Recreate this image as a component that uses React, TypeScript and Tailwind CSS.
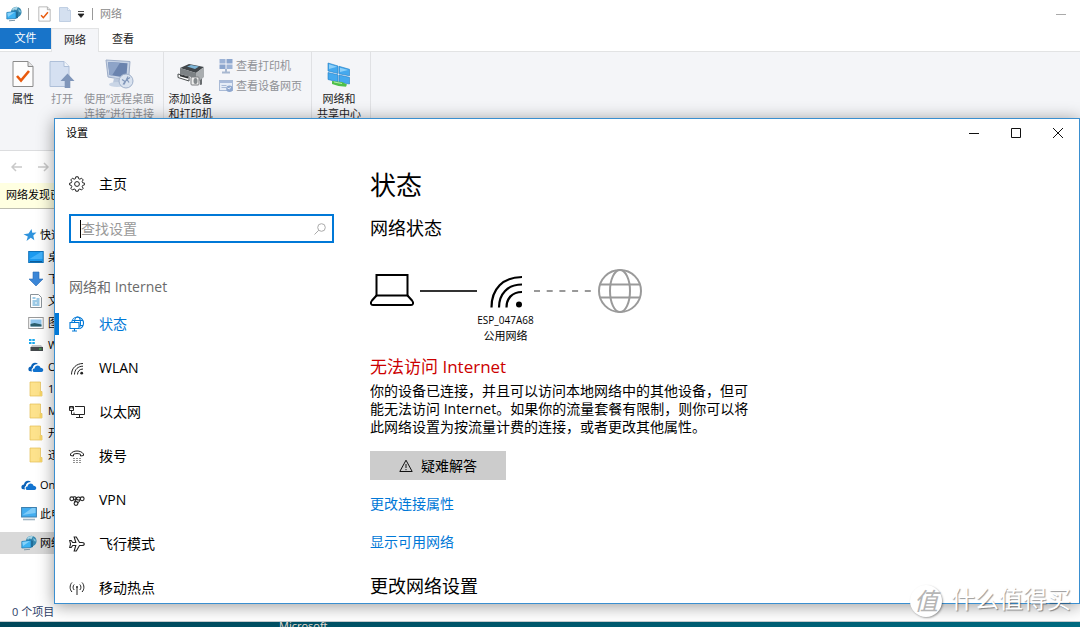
import React, { useState } from 'react';

type IconProps = { className?: string };

/* ---------- Explorer icons ---------- */

const NetworkPcIcon = ({ className = '' }: IconProps) => (
    <svg className={className} width="16" height="16" viewBox="0 0 16 16">
        <circle cx="10.300" cy="6" r="5.300" fill="#3787ad" />
        <path d="M6 3c1.500-2 4-2.500 6-1.800L10.500 4 8 3.500 7 5z" fill="#a8d5e6" />
        <path d="M12 3l2.500 1.500.5 2-2-.5z" fill="#7fc0dc" />
        <path d="M.8 6.500L10 5.300v7.200L.8 13z" fill="#3db2f2" stroke="#1c75ad" strokeWidth=".7" />
        <path d="M1.300 7L9 6 2 11z" fill="#86d2fa" />
        <path d="M10 5.300l2 .6v6l-2 .6z" fill="#216d99" />
        <path d="M3 14.800l6-.5" stroke="#7d97a8" strokeWidth="1" />
    </svg>
);

const PropertiesIcon = ({ className = '' }: IconProps) => (
    <svg className={className} viewBox="0 0 22 28">
        <path d="M1 1.500h15l5 5v20H1z" fill="#fdfdfd" stroke="#8a8a8a" />
        <path d="M16 1.500v5h5" fill="#e4e4e4" stroke="#8a8a8a" />
        <path d="M5 16l4 4.500L17 11" fill="none" stroke="#e8590c" strokeWidth="2.600" />
    </svg>
);

const PageIcon = () => (
    <svg width="12" height="15" viewBox="0 0 12 15">
        <path d="M.5.500h8l3 3v11H.5z" fill="#d4e0f0" stroke="#c0cfe3" />
        <path d="M8.500.500v3h3" fill="#eef3fa" stroke="#c0cfe3" />
    </svg>
);

const OpenIcon = () => (
    <svg width="26" height="28" viewBox="0 0 26 28">
        <path d="M1 1.500h14l5 5v20H1z" fill="#d5e0f1" stroke="#aebfd8" />
        <path d="M15 1.500v5h5" fill="#f2f6fb" stroke="#aebfd8" />
        <path d="M18.500 13.500l7 7.500h-4.200v7h-5.600v-7h-4.200z" fill="#8096ba" />
    </svg>
);

const RemoteIcon = () => (
    <svg width="30" height="30" viewBox="0 0 30 30">
        <path d="M2 1l24 1.500-1.500 19L4 18z" fill="#c8d4e6" stroke="#9dadc8" />
        <path d="M4 3l19.500 1.200-1.200 14.600L5.500 16z" fill="#6a83ae" />
        <path d="M4 3l12 .8L8 16.500l-2.500-.5z" fill="#8ea4c8" />
        <path d="M10 19l6 1v4H9z" fill="#b9c7dc" />
        <ellipse cx="13" cy="25.500" rx="8" ry="2.500" fill="#c9d5e6" />
        <circle cx="22" cy="22" r="7" fill="#d9e2ef" stroke="#9fb0ca" />
        <path d="M18 20.500l3 2-2 3M26 18.500l-3 2 2 3M20 25.500l4-8" fill="none" stroke="#8298bb" strokeWidth="1.200" />
    </svg>
);

const PrinterIcon = () => (
    <svg width="28" height="28" viewBox="0 0 28 28">
        <path d="M3 8l9-4 15 3-8 6z" fill="#41464a" />
        <path d="M10 6.500l4-1.500 8 1.600-4 2.400z" fill="#7fb6d8" />
        <path d="M3 8l16 5v12l-5-2v-6L3 14z" fill="#7d8285" />
        <path d="M19 13l8-6v10l-8 7z" fill="#a9adb0" />
        <path d="M1 14l11 3v4L1 17.500z" fill="#fff" stroke="#4a4e50" />
        <path d="M3 15.500l8 2.300" stroke="#2c2f31" strokeWidth="1.500" />
        <rect x="14" y="17" width="8" height="8" rx="1" fill="#ececec" stroke="#7c7f81" />
        <ellipse cx="18.500" cy="21" rx="2" ry="3" fill="#83888b" />
        <path d="M23 20l2-1.500v6L23 25z" fill="#696d70" />
    </svg>
);

const ViewPrintersIcon = () => (
    <svg width="14" height="16" viewBox="0 0 14 16">
        <rect x=".5" y="1" width="6" height="4.500" fill="#9db3d6" />
        <rect x="7.500" y="1" width="6" height="4.500" fill="#8ba5cd" />
        <rect x=".5" y="6.500" width="6" height="4.500" fill="#8ba5cd" />
        <rect x="7.500" y="6.500" width="6" height="4.500" fill="#9db3d6" />
        <path d="M7 11v3M3 14.500h8" stroke="#a8b8d0" strokeWidth="2" />
    </svg>
);

const ViewPageIcon = () => (
    <svg width="14" height="14" viewBox="0 0 14 14">
        <rect x=".5" y="1.500" width="13" height="10" fill="#e6edf7" stroke="#a9bad6" />
        <path d="M.5 3h13" stroke="#a9bbda" strokeWidth="2" />
        <path d="M2.500 6.500h5M2.500 8.500h5" stroke="#a9bad6" />
        <circle cx="10.500" cy="9.800" r="3.300" fill="#8ea7cf" />
        <path d="M8.500 9l2 1 1-2" fill="none" stroke="#e6edf7" />
    </svg>
);

const SharingIcon = () => (
    <svg width="26" height="28" viewBox="0 0 26 28">
        <g fill="#45a9ee" stroke="#1f7cc4" strokeWidth=".6">
            <path d="M2 3l10 3v7.500L2 11z" />
            <path d="M13 6.300l10.500 3v6.500L13 13.800z" />
            <path d="M2 12.500l10 2.300V22L2 19.500z" />
            <path d="M13 15l10.500 2.300V24L13 22.300z" />
        </g>
        <path d="M3 4.300l8 2.500L3 9zM14 7.800l8 2.200-8 2z" fill="#8fd0f8" />
        <path d="M6 21l10 1 5 2.500-1 2.300-7.500-.8-6.500-2z" fill="#4fc04a" />
        <path d="M8 22l8 1.500" stroke="#b5ecaa" />
    </svg>
);

const StarIcon = () => (
    <svg width="14" height="14" viewBox="0 0 14 14">
        <path d="M8.500 1l.8 3.800 4.200-.2-3.200 3 1 4.600-3.500-2.400L3.500 13l1.300-4.500L.5 6.300l5-.9z" fill="#2f93dd" />
    </svg>
);

const DesktopIcon = () => (
    <svg width="16" height="14" viewBox="0 0 16 14">
        <rect x=".7" y="1.500" width="14.500" height="11" fill="#1b9af0" stroke="#1272b8" />
        <path d="M1.500 9L13 2h1.500v7z" fill="#43b2fa" />
        <path d="M2 11.500h12" stroke="#0d5d9b" />
    </svg>
);

const DownloadIcon = () => (
    <svg width="16" height="16" viewBox="0 0 16 16">
        <path d="M5 1h6v7h4l-7 7-7-7h4z" fill="#3b87d8" stroke="#2a6db5" strokeWidth=".6" />
    </svg>
);

const DocIcon = () => (
    <svg width="16" height="16" viewBox="0 0 16 16">
        <path d="M2.500 1.500h8l3 3v10h-11z" fill="#fff" stroke="#8b949b" />
        <path d="M4.500 5h3M8.500 6h3M4.500 8h7M4.500 10h3M8.500 10h3M4.500 12h7" stroke="#3a96cf" />
    </svg>
);

const PictureIcon = () => (
    <svg width="16" height="14" viewBox="0 0 16 14">
        <rect x=".7" y="1.500" width="14.500" height="11" fill="#fff" stroke="#9a9a9a" />
        <rect x="2.500" y="3.500" width="11" height="7" fill="#8fc6ee" />
        <path d="M2.500 8l4-1 7 1.500v2h-11z" fill="#2b5f6d" />
    </svg>
);

const DriveIcon = () => (
    <svg width="16" height="14" viewBox="0 0 16 14">
        <path d="M1 1h2.500v2H1zM4.300 1h2.500v2H4.300zM1 4h2.500v2H1zM4.300 4h2.500v2H4.300z" fill="#18a8ee" />
        <path d="M4 7h9l2 2.500H2.500z" fill="#c3c6c8" />
        <rect x="2.500" y="9" width="12.500" height="4" fill="#44494c" />
        <rect x="11" y="10.500" width="2.500" height="1" fill="#49d657" />
    </svg>
);

const CloudIcon = () => (
    <svg width="16" height="12" viewBox="0 0 16 12">
        <path d="M1 10C-.5 7.500 1 5.500 3 5.500 3.300 2 7.500.5 10 3 7 3 5 4.500 4.800 7 3.500 7.500 3.300 9 4 10.500z" fill="#0a62b8" />
        <path d="M5.500 11C4 9.500 4.500 7.500 6.500 7.500 7 4 11.500 3.500 12.500 6.800c3.500 0 3.500 4.200 1 4.200z" fill="#1173d0" />
    </svg>
);

const FolderIcon = () => (
    <svg width="16" height="16" viewBox="0 0 16 16">
        <path d="M2 1h10.500v9.500H14V15H2z" fill="#fde28c" stroke="#e3bd55" strokeWidth=".7" />
        <path d="M11.500 10.500H14V15h-2.500z" fill="#f6d465" />
    </svg>
);

const ThisPcIcon = () => (
    <svg width="16" height="16" viewBox="0 0 16 16">
        <rect x=".6" y="1.500" width="14.800" height="9.500" fill="#43adf0" stroke="#3d7fae" />
        <path d="M1.500 9L11 2h3.500v5z" fill="#7fcbf8" />
        <path d="M2 13.500h12" stroke="#9fb4c4" strokeWidth="1.600" />
    </svg>
);

/* ---------- Settings icons ---------- */

const GearIcon = () => (
    <svg width="16" height="16" viewBox="0 0 16 16" fill="none" stroke="#222">
        <path d="M6.800.8h2.400l.4 1.900 1.300.5 1.600-1 1.700 1.700-1 1.600.5 1.300 1.900.4v1.600l-1.900.6-.5 1.300 1 1.600-1.700 1.700-1.600-1-1.300.5-.4 1.700H6.800l-.4-1.700-1.300-.5-1.600 1-1.700-1.700 1-1.600-.5-1.300-1.700-.5V7.200l1.700-.4.500-1.300-1-1.600 1.700-1.700 1.600 1 1.300-.5z" />
        <circle cx="8" cy="8" r="2.400" />
    </svg>
);

const StatusIcon = () => (
    <svg width="16" height="16" viewBox="0 0 16 16" fill="none" stroke="currentColor" strokeWidth="1.100">
        <path d="M2.700 6.500C3 3.300 5.500 1 8.500 1c3.500 0 6 2.700 6 6 0 2.800-1.700 4.900-4 5.700" />
        <path d="M5.500 6.500C5.500 3.500 6.800 1 8.500 1s3 2.700 3 6c0 1.500-.3 3-.8 4M3.200 4.500h10.700M11 9.500h3" />
        <path d="M1 6.500h9v6H1zM5.500 12.500V15M3 15h5" />
    </svg>
);

const WlanIcon = () => (
    <svg width="16" height="16" viewBox="0 0 16 16" fill="none" stroke="#222">
        <path d="M2.500 14.500C2.500 8 7.500 3.500 14 3.500M5.500 14.500c0-5 3.500-8.300 8.500-8.300M8.500 14.500c0-3.200 2.200-5.500 5.500-5.500" />
        <circle cx="12.700" cy="13.200" r="1.400" fill="#222" stroke="none" />
    </svg>
);

const EthernetIcon = () => (
    <svg width="16" height="16" viewBox="0 0 16 16" fill="none" stroke="#222">
        <path d="M6 2.500h9.500v8H5V8.500M10.500 10.500v3M7 13.500h7" />
        <path d="M.5 2.500h4v4h-4zM2.500 6.500v4H5M1.800 2.500v2M3.300 2.500v2" />
    </svg>
);

const DialIcon = () => (
    <svg width="16" height="16" viewBox="0 0 16 16" fill="none" stroke="#222">
        <path d="M1.500 7.500V6C4 2 12 2 14.500 6v1.500l-3 .5V6.300C9.500 5.300 6.500 5.300 4.500 6.300V8z" />
        <path d="M4.500 10.500h1M7.500 10.500h1M10.500 10.500h1M4.500 12.500h1M7.500 12.500h1M10.500 12.500h1M4.500 14.500h1M7.500 14.500h1M10.500 14.500h1" />
    </svg>
);

const VpnIcon = () => (
    <svg width="16" height="16" viewBox="0 0 16 16" fill="none" stroke="#222" strokeWidth="1.100">
        <circle cx="2.800" cy="6.800" r="1.900" />
        <circle cx="13.200" cy="6.800" r="1.900" />
        <circle cx="7" cy="11.500" r="1.900" />
        <path d="M4 5.300C5.500 4 7 5 7.500 6.500c.5 1.500 2 2 4 1M4.500 8c1.500.5 2-1.500 3.500-2.500 1.300-.8 2.500-.5 3.300.8M5.500 10.200l1.800-2.700M8.800 11L11 8.500" />
    </svg>
);

const PlaneIcon = () => (
    <svg width="16" height="16" viewBox="0 0 16 16" fill="none" stroke="#222" strokeWidth="1.100">
        <path d="M10.500 6.500H13c3 0 3 3 0 3h-2.500L7.300 15H5.200l1.600-5.500H3.700L2.200 11.500H.700L1.500 8 .700 4.500h1.500l1.500 2h3.100L5.200 1h2.100z" />
    </svg>
);

const HotspotIcon = () => (
    <svg width="16" height="16" viewBox="0 0 16 16" fill="none" stroke="#222">
        <path d="M3 2.500C.500 5 .500 9.500 3 12M13 2.500c2.500 2.500 2.500 7 0 9.500M5.200 4.500c-1.500 1.500-1.500 4 0 5.500M10.800 4.500c1.500 1.500 1.500 4 0 5.500M8 7.500V15" />
        <circle cx="8" cy="7" r="1" fill="#222" stroke="none" />
    </svg>
);

const LaptopIcon = () => (
    <svg width="44" height="44" viewBox="0 0 44 44" fill="none" stroke="#000" strokeWidth="2">
        <path d="M6.500 6h31v20.500h-31z" />
        <path d="M6.500 26.500L2 31.500c-2 2.500-1 4.500 1 4.500h38c2 0 3-2 1-4.500l-4.500-5" />
    </svg>
);

const WifiIcon = () => (
    <svg width="32" height="44" viewBox="0 0 32 44" fill="none" stroke="#000" strokeWidth="2.200">
        <path d="M1.500 38.500C1.500 20 13 8 32 8M9 38.500C9 25 17.500 15.500 32 15.500M16.500 38.500c0-9 5.500-15.500 15.500-15.500" />
        <circle cx="29" cy="35.500" r="3" fill="#000" stroke="none" />
    </svg>
);

const GlobeIcon = () => (
    <svg width="44" height="44" viewBox="0 0 44 44" fill="none" stroke="#9a9a9a" strokeWidth="2">
        <circle cx="22" cy="22" r="21" />
        <ellipse cx="22" cy="22" rx="10" ry="21" />
        <path d="M2.500 15.500h39M2.500 28.500h39" />
    </svg>
);

const treeItems = [
    { icon: <DesktopIcon />, label: '桌面' },
    { icon: <DownloadIcon />, label: '下载' },
    { icon: <DocIcon />, label: '文档' },
    { icon: <PictureIcon />, label: '图片' },
    { icon: <DriveIcon />, label: 'W' },
    { icon: <CloudIcon />, label: 'O' },
    { icon: <FolderIcon />, label: '1' },
    { icon: <FolderIcon />, label: 'M' },
    { icon: <FolderIcon />, label: '开' },
    { icon: <FolderIcon />, label: '迅' },
];

const navItems = [
    { icon: <StatusIcon />, label: '状态' },
    { icon: <WlanIcon />, label: 'WLAN' },
    { icon: <EthernetIcon />, label: '以太网' },
    { icon: <DialIcon />, label: '拨号' },
    { icon: <VpnIcon />, label: 'VPN' },
    { icon: <PlaneIcon />, label: '飞行模式' },
    { icon: <HotspotIcon />, label: '移动热点' },
];

interface RibbonButtonProps {
    icon: React.ReactNode;
    lines: string[];
    className: string;
}

const RibbonButton: React.FC<RibbonButtonProps> = ({ icon, lines, className }) => (
    <button className={`flex flex-col items-center shrink-0 pt-2 leading-[15px] whitespace-nowrap ${className}`}>
        <span className="h-7 mb-[3px] flex items-center justify-center">{icon}</span>
        {lines.map((line) => <span key={line}>{line}</span>)}
    </button>
);

const Explorer = () => (
    <div className="h-full flex flex-col bg-white text-[11px] text-[#222]">
        {/* Title bar */}
        <header className="h-7 shrink-0 flex items-center pl-[6px] pr-[14px] text-[#8a8a8a]">
            <NetworkPcIcon />
            <span className="w-px h-3 bg-[#999] ml-[6px] mr-[9px]" />
            <PropertiesIcon className="w-[13px] h-4" />
            <span className="ml-2"><PageIcon /></span>
            <svg className="ml-[6px]" width="8" height="8" viewBox="0 0 8 8">
                <path d="M1 1.500h6M1 4h6L4 7.500z" fill="#222" stroke="#222" strokeWidth=".8" />
            </svg>
            <span className="w-px h-3 bg-[#999] mx-[7px]" />
            <span>网络</span>
            <button aria-label="最小化" className="ml-auto w-[10px] h-3 flex items-center">
                <span className="w-full h-px bg-[#aaa]" />
            </button>
        </header>

        {/* Ribbon tabs */}
        <nav className="h-6 shrink-0 flex border-b border-[#e2e3e4]">
            <button className="w-[51px] h-[21px] bg-[#1874c9] text-white">文件</button>
            <button className="w-12 h-6 bg-[#f4f5f8] border-x border-t border-[#e2e3e4]">网络</button>
            <button className="w-12 h-[23px]">查看</button>
        </nav>

        {/* Ribbon */}
        <div className="h-[99px] shrink-0 flex bg-[#f4f5f8] border-b border-[#dcdddf]">
            <div className="flex pr-[3px] border-r border-[#e0e1e4]">
                <RibbonButton className="w-[46px]" icon={<PropertiesIcon className="w-[22px] h-7" />} lines={['属性']} />
                <RibbonButton className="w-8 text-[#8f9196]" icon={<OpenIcon />} lines={['打开']} />
                <RibbonButton className="w-[82px] text-[#8f9196]" icon={<RemoteIcon />} lines={['使用“远程桌面', '连接”进行连接']} />
            </div>
            <div className="flex pr-[9px] border-r border-[#e0e1e4]">
                <RibbonButton className="w-[53px]" icon={<PrinterIcon />} lines={['添加设备', '和打印机']} />
                <div className="flex flex-col pt-1 pl-[2px] text-[#8f9196]">
                    <button className="h-5 flex items-center gap-[3px]"><ViewPrintersIcon />查看打印机</button>
                    <button className="h-5 flex items-center gap-[3px]"><ViewPageIcon />查看设备网页</button>
                </div>
            </div>
            <div className="pr-1 flex border-r border-[#e0e1e4]">
                <RibbonButton className="w-[54px]" icon={<SharingIcon />} lines={['网络和', '共享中心']} />
            </div>
        </div>

        <div className="h-8 shrink-0 flex items-center gap-4 pl-[11px]">
            <button aria-label="后退">
                <svg width="11" height="10" viewBox="0 0 11 10" fill="none" stroke="#c9c9c9" strokeWidth="1.500">
                    <path d="M11 5H1M5 1L1 5l4 4" />
                </svg>
            </button>
            <button aria-label="前进">
                <svg width="11" height="10" viewBox="0 0 11 10" fill="none" stroke="#c9c9c9" strokeWidth="1.500">
                    <path d="M0 5h10M6 1l4 4-4 4" />
                </svg>
            </button>
        </div>
        <div className="h-[26px] shrink-0 flex items-center pl-[6px] bg-[#ffffe1] border-b border-[#bdbdb0] text-black">
            网络发现已
        </div>

        {/* Folder tree */}
        <div className="flex-1 min-h-0 overflow-hidden pt-[15px] text-black">
            <div className="h-[22px] flex items-center gap-[3px] pl-[23px]"><StarIcon />快速</div>
            {treeItems.map((item, i) => (
                <div key={i} className="h-[22px] flex items-center gap-1 pl-7">{item.icon}{item.label}</div>
            ))}
            <div className="h-[22px] mt-2 flex items-center gap-[3px] pl-[21px]"><CloudIcon />OneDrive</div>
            <div className="h-[22px] mt-[7px] flex items-center gap-[3px] pl-[21px]"><ThisPcIcon />此电脑</div>
            <div className="h-[22px] mt-[7px] flex items-center gap-[3px] pl-[21px] bg-[#d9d9d9]"><NetworkPcIcon />网络</div>
        </div>
        <footer className="h-[22px] shrink-0 flex items-center pl-3 pt-1 border-b border-[#c8cdd0] text-[#2c4068]">
            0 个项目
        </footer>
        <div className="h-[5px] shrink-0 overflow-hidden pl-[279px] bg-linear-to-r from-[#00475a] to-[#006a80] text-[#e8ddd2] leading-[8px]">
            Microsoft
        </div>
    </div>
);

const Settings = () => {
    const [active, setActive] = useState('状态');
    const [query, setQuery] = useState('');

    return (
        <div className="h-full flex flex-col bg-white border border-[#3a8fd0] text-sm text-black overflow-hidden">
            <header className="h-7 shrink-0 flex items-center pl-[11px] pr-[15px] text-[11px]">
                <span>设置</span>
                <div className="ml-auto flex items-center gap-[30px]">
                    <button aria-label="最小化">
                        <svg className="w-3 h-3" viewBox="0 0 12 12" stroke="#111"><path d="M1 6.500h10" /></svg>
                    </button>
                    <button aria-label="最大化">
                        <svg className="w-3 h-3" viewBox="0 0 12 12" fill="none" stroke="#111"><path d="M1.500 1.500h9v9h-9z" /></svg>
                    </button>
                    <button aria-label="关闭">
                        <svg className="w-3 h-3" viewBox="0 0 12 12" stroke="#111"><path d="M1 1l10 10M11 1L1 11" /></svg>
                    </button>
                </div>
            </header>

            <div className="flex-1 min-h-0 flex">
                {/* Side navigation */}
                <aside className="w-[315px] shrink-0 pt-[15px] overflow-hidden">
                    <button className="h-11 w-full flex items-center gap-[14px] pl-[14px]">
                        <GearIcon />主页
                    </button>
                    <label className="mt-2 ml-[14px] mr-9 h-[29px] flex items-center pl-[9px] pr-[6px] border-2 border-[#0078d7]">
                        <span className="w-px h-[18px] bg-black" />
                        <input
                            aria-label="查找设置"
                            value={query}
                            onChange={(e) => setQuery(e.target.value)}
                            placeholder="查找设置"
                            className="flex-1 min-w-0 h-5 leading-5 outline-none placeholder-[#999]"
                        />
                        <svg width="12" height="12" viewBox="0 0 12 12" fill="none" stroke="#aaa">
                            <circle cx="7.500" cy="4.500" r="3.800" /><path d="M4.800 7.200L.5 11.500" />
                        </svg>
                    </label>
                    <h3 className="mt-[34px] mb-[5px] pl-[14px] leading-5 text-[#6b6b6b]">网络和 Internet</h3>
                    <nav>
                        {navItems.map((item) => (
                            <button
                                key={item.label}
                                onClick={() => setActive(item.label)}
                                className={`h-11 w-full flex items-center ${active === item.label ? 'text-[#0078d7]' : ''}`}
                            >
                                <span className={`w-1 h-[22px] mr-[10px] ${active === item.label ? 'bg-[#0078d7]' : ''}`} />
                                <span className="mr-[14px]">{item.icon}</span>
                                {item.label}
                            </button>
                        ))}
                    </nav>
                </aside>

                {/* Status page */}
                <main className="flex-1 min-w-0 overflow-hidden pt-[22px]">
                    <h1 className="text-[26px] leading-8">状态</h1>
                    <h2 className="mt-[15px] text-lg leading-6">网络状态</h2>
                    <div className="mt-[29px] flex items-start">
                        <LaptopIcon />
                        <div className="h-11 flex items-center ml-[6px]"><span className="w-[57px] h-[2px] bg-[#333]" /></div>
                        <div className="w-[57px] flex flex-col items-center whitespace-nowrap">
                            <WifiIcon />
                            <span className="text-[10px] leading-[15px]">ESP_047A68</span>
                            <span className="text-[11px] leading-[15px]">公用网络</span>
                        </div>
                        <svg className="mr-[7px]" width="57" height="44" viewBox="0 0 57 44">
                            <path d="M0 22h57" stroke="#999" strokeWidth="2" strokeDasharray="6 6.700" />
                        </svg>
                        <GlobeIcon />
                    </div>
                    <h3 className="mt-3 text-[17px] leading-6 text-[#cc0000]">无法访问 Internet</h3>
                    <p className="mt-[3px] max-w-[390px] leading-[18px]">
                        你的设备已连接，并且可以访问本地网络中的其他设备，但可能无法访问 Internet。如果你的流量套餐有限制，则你可以将此网络设置为按流量计费的连接，或者更改其他属性。
                    </p>
                    <button className="mt-[15px] w-[136px] h-[29px] flex items-center justify-center gap-2 bg-[#cccccc]">
                        <svg width="14" height="14" viewBox="0 0 14 14" fill="none" stroke="#111">
                            <path d="M7 1.200L13.200 12.500H.8zM7 5v4M7 10v1.200" />
                        </svg>
                        疑难解答
                    </button>
                    <a href="#properties" className="mt-[14px] block w-fit leading-5 text-[#0078d7]">更改连接属性</a>
                    <a href="#available" className="mt-[18px] block w-fit leading-5 text-[#0078d7]">显示可用网络</a>
                    <h2 className="mt-[22px] text-lg leading-6">更改网络设置</h2>
                </main>
            </div>
        </div>
    );
};

export default function App() {
    return (
        <div className={`relative h-screen overflow-hidden font-["Open_Sans","Noto_Sans_CJK_SC",sans-serif]`}>
            <Explorer />
            <div className="absolute left-[54px] right-0 top-[118px] bottom-[23px] shadow-[0_2px_16px_rgba(0,0,0,0.4)]">
                <Settings />
            </div>
            {/* Watermark */}
            <div className="absolute right-[9px] bottom-[10px] flex items-center gap-[9px] text-white">
                <span className="w-8 h-8 rounded-full bg-white flex items-center justify-center text-2xl italic text-[#b5b5b5] shadow-[1px_1px_2px_rgba(0,0,0,0.35)]">值</span>
                <span className="pb-1 text-2xl leading-7 [text-shadow:1px_1px_1px_rgba(0,0,0,0.4)]">什么值得买</span>
            </div>
        </div>
    );
}
